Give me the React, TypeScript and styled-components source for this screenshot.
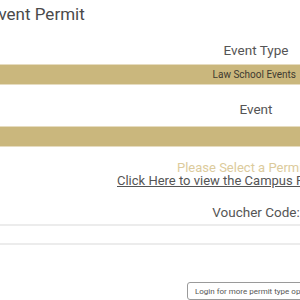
import styled, { createGlobalStyle } from "styled-components";

const GlobalStyle = createGlobalStyle`
  html, body {
    margin: 0;
    padding: 0;
    background: #ffffff;
    overflow: hidden;
  }
  body {
    font-family: Roboto, "Liberation Sans", Arial, sans-serif;
    color: #555555;
  }
`;

export const Page = styled.div`
  display: flex;
  flex-direction: column;
  width: 300px;
  height: 300px;
  overflow: hidden;
`;

export const Title = styled.h1`
  margin: 4px 0 0 -11px;
  font-size: 17px;
  line-height: 20px;
  font-weight: 400;
  color: #4a4a4a;
  white-space: nowrap;
`;

export const Label = styled.div<{ $top: number }>`
  margin: ${(p) => p.$top}px 0 0 212px;
  width: 88px;
  font-size: 13.5px;
  line-height: 16px;
  color: #555555;
  white-space: nowrap;
  display: flex;
  justify-content: center;
`;

export const SelectBar = styled.div<{ $top: number }>`
  margin-top: ${(p) => p.$top}px;
  height: 20px;
  background: #cab77d;
  border-top: 1px solid #e6dcc0;
  border-bottom: 1px solid #e6dcc0;
  display: flex;
  align-items: center;
  justify-content: flex-end;
  padding-right: 4px;
  font-size: 10px;
  color: #3e3a30;
  white-space: nowrap;
`;

export const Notice = styled.div`
  margin: 15px 0 0 177px;
  font-size: 13px;
  line-height: 12px;
  color: #dccb9c;
  white-space: nowrap;
`;

export const MapLink = styled.a`
  display: block;
  margin: 0 0 0 117px;
  font-size: 13px;
  line-height: 13px;
  color: #555555;
  text-decoration: underline;
  white-space: nowrap;
`;

export const VoucherInput = styled.input`
  margin-top: 4px;
  height: 21px;
  width: 100%;
  box-sizing: border-box;
  border: none;
  border-top: 2px solid #ececec;
  border-bottom: 2px solid #ececec;
  outline: none;
  background: #ffffff;
`;

export const LoginButton = styled.button`
  margin: 37px 0 0 187px;
  width: 140px;
  height: 18px;
  flex-shrink: 0;
  border: 1px solid #9a9a9a;
  border-radius: 3px;
  background: #ffffff;
  font-family: Roboto, "Liberation Sans", Arial, sans-serif;
  font-size: 8px;
  color: #555555;
  text-align: left;
  padding: 0 0 0 7px;
  white-space: nowrap;
`;

export default function App() {
  return (
    <>
      <GlobalStyle />
      <Page>
        <Title>Event Permit</Title>
        <Label $top={18}>Event Type</Label>
        <SelectBar $top={6}>Law School Events</SelectBar>
        <Label $top={16}>Event</Label>
        <SelectBar $top={9} />
        <Notice>Please Select a Permit Type</Notice>
        <MapLink href="#">Click Here to view the Campus Parking Map</MapLink>
        <Label $top={17}>Voucher Code:</Label>
        <VoucherInput />
        <LoginButton>Login for more permit type options</LoginButton>
      </Page>
    </>
  );
}
